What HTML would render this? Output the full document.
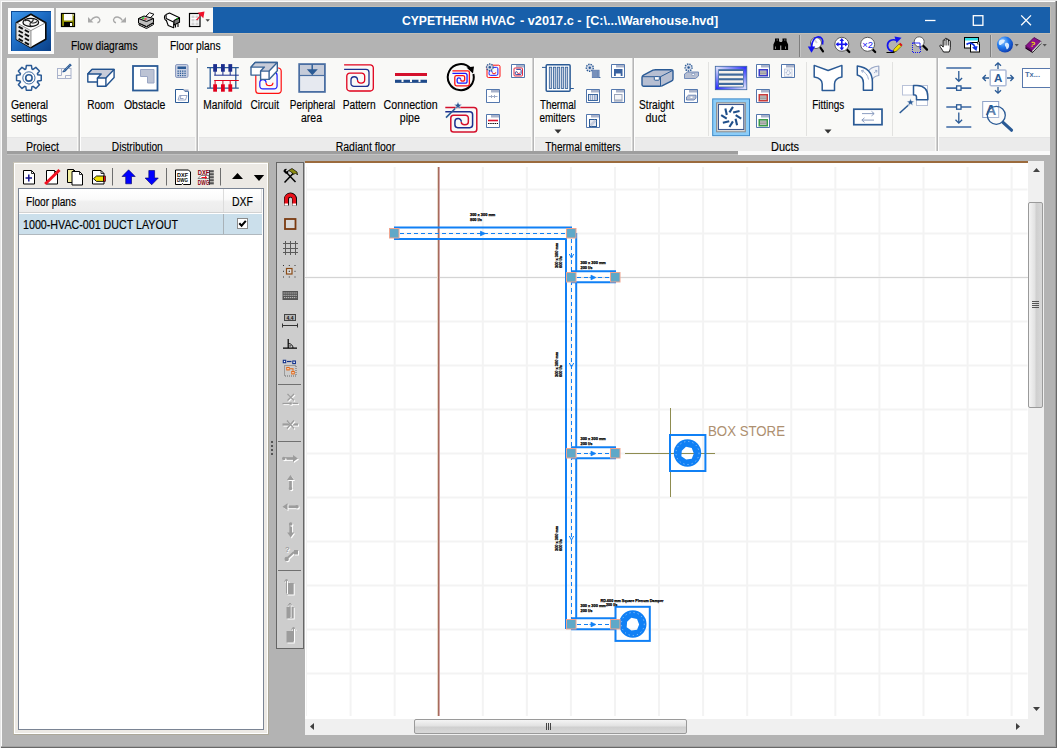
<!DOCTYPE html>
<html lang="en"><head><meta charset="utf-8"><title>CYPETHERM HVAC - v2017.c</title>
<style>
html,body{margin:0;padding:0;}
body{width:1057px;height:748px;overflow:hidden;background:#b3b3b3;font-family:"Liberation Sans",sans-serif;}
#app{position:relative;width:1057px;height:748px;overflow:hidden;background:#b3b3b3;}
#app div,#app span,#app svg{position:absolute;box-sizing:border-box;}
.t{white-space:nowrap;display:block;-webkit-text-stroke:0.15px currentColor;}
svg{overflow:hidden;}

</style></head>
<body>
<div id="app">
<div style="left:0;top:0;width:1057px;height:1px;background:#e6e6e6"></div>
<div style="left:0;top:1px;width:1055px;height:1px;background:#fbfbfb"></div>
<div style="left:0;top:0;width:1px;height:748px;background:#e6e6e6"></div>
<div style="left:1px;top:1px;width:1px;height:745px;background:#fbfbfb"></div>
<div style="left:1055px;top:2px;width:1px;height:745px;background:#9c9c9c"></div>
<div style="left:1056px;top:1px;width:1px;height:747px;background:#686868"></div>
<div style="left:2px;top:746px;width:1054px;height:1px;background:#a2a2a2"></div>
<div style="left:1px;top:747px;width:1056px;height:1px;background:#686868"></div>
<div style="left:213px;top:6px;width:838px;height:28px;background:#c2beb6"></div>
<div id="titlebar" style="left:213px;top:7px;width:837px;height:26px;background:#185faa"></div>
<span class="t" style="left:402.00px;top:13.50px;font-size:12.5px;line-height:15px;color:#fff;transform:scaleX(0.9704);transform-origin:0 50%;font-weight:bold;-webkit-text-stroke:0;">CYPETHERM HVAC</span>
<span class="t" style="left:520.00px;top:13.50px;font-size:12.5px;line-height:15px;color:#fff;transform:scaleX(1.0174);transform-origin:0 50%;font-weight:bold;-webkit-text-stroke:0;">- v2017.c -</span>
<span class="t" style="left:585.80px;top:13.50px;font-size:12.5px;line-height:15px;color:#fff;transform:scaleX(1.0055);transform-origin:0 50%;font-weight:bold;-webkit-text-stroke:0;">[C:\...\Warehouse.hvd]</span>
<svg style="left:915px;top:7px" width="135" height="26" viewBox="0 0 135 26"><g stroke="#fff" stroke-width="1.3" fill="none"><path d="M10 13.5h10.500"/><rect x="58.300" y="8.700" width="9.600" height="9.600"/><path d="M106.200 8.400l9.800 9.800M116 8.400l-9.800 9.800"/></g></svg>
<div style="left:8px;top:8px;width:46px;height:46px;background:#fcfcfc"></div>
<div style="left:11px;top:11px;width:40px;height:40px;background:linear-gradient(135deg,#3f97ea 0%,#1d6cc4 45%,#0a3f86 100%);border-top:1px solid #0d4a94;border-left:1px solid #0d4a94"></div>
<div style="left:56px;top:8px;width:157px;height:24px;background:#f9f9f7"></div>
<div style="left:158px;top:36px;width:75px;height:23px;background:#f9f9f7"></div>
<span class="t" style="left:71.00px;top:38.50px;font-size:12.5px;line-height:15px;color:#000;transform:scaleX(0.8183);transform-origin:0 50%;">Flow diagrams</span>
<span class="t" style="left:170.00px;top:38.50px;font-size:12.5px;line-height:15px;color:#000;transform:scaleX(0.8168);transform-origin:0 50%;">Floor plans</span>
<svg style="left:11px;top:11px" width="40" height="40" viewBox="0 0 40 40">
<path d="M19.9 3.2L34.8 11.7V28.2L19.9 36.6L5.4 28.2V11.7z" fill="#fff" stroke="#0a0a0a" stroke-width="1.6" stroke-linejoin="round"/>
<path d="M5.4 11.7L19.9 19.6V36.6L5.4 28.2z" fill="#e4e4e4"/>
<path d="M19.9 19.6V36" stroke="#9a9a9a" stroke-width="1.2"/>
<path d="M6 12L19.9 19.6L34.2 12" fill="none" stroke="#8a8a8a" stroke-width="0.9"/>
<path d="M7.6 15.6l4.2 2.3" stroke="#0a0a0a" stroke-width="1.8"/>
<path d="M13.8 19.0l4.2 2.3" stroke="#0a0a0a" stroke-width="1.8"/>
<path d="M7.6 19.7l4.2 2.3" stroke="#0a0a0a" stroke-width="1.8"/>
<path d="M13.8 23.099999999999998l4.2 2.3" stroke="#0a0a0a" stroke-width="1.8"/>
<path d="M7.6 23.799999999999997l4.2 2.3" stroke="#0a0a0a" stroke-width="1.8"/>
<path d="M13.8 27.199999999999996l4.2 2.3" stroke="#0a0a0a" stroke-width="1.8"/>
<path d="M7.6 27.9l4.2 2.3" stroke="#0a0a0a" stroke-width="1.8"/>
<path d="M13.8 31.299999999999997l4.2 2.3" stroke="#0a0a0a" stroke-width="1.8"/>
<ellipse cx="19.8" cy="11.4" rx="7.8" ry="4.1" fill="#f4f4f4" stroke="#111" stroke-width="1.3"/>
<path d="M19.8 11.4c-2-2.4-4.4-2.6-6.2-1.4M19.8 11.4c2.8-1.4 3-3 1.6-4M19.8 11.4c2.6 1 5 .6 6.4-1M19.8 11.4c-1.4 1.6-1 3.2 .6 4" fill="none" stroke="#222" stroke-width="1.1"/>
</svg>
<svg style="left:56px;top:8px" width="157" height="24" viewBox="56 8 157 24">
<rect x="61.5" y="13.5" width="13" height="13" fill="#8c8c00" stroke="#000" stroke-width="1.2"/>
<rect x="64" y="14" width="8.5" height="6.5" fill="#fff"/>
<rect x="64" y="22" width="8.5" height="4.5" fill="#000"/>
<rect x="70" y="23" width="2" height="3" fill="#fff"/>
<rect x="73" y="14.5" width="1" height="1" fill="#fff"/>
<g fill="none" stroke="#a9a9a9" stroke-width="1.4"><path d="M91 20.5c2-3.6 6-4.4 8-2.4c1.8 2 .6 4.2-1.6 4.6"/><path d="M119.5 22.700c-2.200-.4-3.400-2.600-1.600-4.600c2-2 6-1.200 8 2.400" transform="translate(-3.500 0)"/></g>
<path d="M88 17v5.500h5.500z" fill="#a9a9a9"/>
<path d="M126 17v5.500h-5.500z" fill="#a9a9a9"/>
<g stroke="#000" stroke-width="1" stroke-linejoin="round">
<path d="M144.500 17.500l5-4.800l4.500 1.600l-5.500 5.200z" fill="#fff"/>
<path d="M138.500 18.500l5.500-2.500l9.500 2.500v4l-7 4l-8-3.500z" fill="#bdbdbd"/>
<path d="M138.500 18.500l8 3l7-3" fill="none"/>
<path d="M139 23.500l7.500 3.500l7-4v1.500l-7 4l-7.500-3.500z" fill="#fff"/>
</g>
<rect x="142" y="17.500" width="2.200" height="1.200" fill="#00d000"/><rect x="144.400" y="18.400" width="2.200" height="1.200" fill="#ff2020"/>
<g stroke="#000" stroke-width="1.1" stroke-linejoin="round">
<path d="M166 14.500l3.500-1.500l9.500 4.500v4l-3 1.800l-9.800-4.800z" fill="#fff"/>
<path d="M165.500 15c-1.500 1-1.500 4.500 .7 5.500" fill="none"/>
<path d="M166.200 20l2 5.500l5.500 2.300v-4.500" fill="#fff"/>
<path d="M174 20.500l5.500-2.700v4.500l-5.500 2.700z" fill="#7a7a7a"/>
<path d="M175.500 24.500v3M178 23.500v3.500" fill="none"/>
</g>
<rect x="176.500" y="18" width="1.300" height="1.300" fill="#00c000"/>
<rect x="189.500" y="13.500" width="10.500" height="13" fill="#fff" stroke="#000" stroke-width="1.200"/>
<g fill="#d4d4d4"><rect x="191.500" y="15.500" width="3" height="2.500"/><rect x="195.500" y="15.500" width="3" height="2.500"/><rect x="191.500" y="19" width="3" height="2.500"/><rect x="195.500" y="19" width="3" height="2.500"/><rect x="191.500" y="22.500" width="3" height="2.500"/><rect x="195.500" y="22.500" width="3" height="2.500"/></g>
<path d="M196 19.800l4.300-4.600l-2.600-2.500l6.800-1.200l-1.200 6.800l-2.500-2.600l-3.300 4.600z" fill="#f0102a"/>
<path d="M205.500 19.300h4.400l-2.200 2.400z" fill="#444"/>
</svg>
<svg style="left:765px;top:33px" width="285" height="25" viewBox="765 33 285 25">
<g fill="#000"><path d="M775 38.500h4v2.500l1.200 1.500v7.500h-6.800v-5.500l1.600-3.500z"/><path d="M782.500 38.500h4l0 2.500l1.600 3.500v5.500h-6.800v-7.500l1.200-1.500z"/><rect x="779.500" y="42" width="3" height="3.500"/></g>
<path d="M775.500 46.500v2.500M785.500 46.500v2.500M776.500 40h1.500M784 40h1.500" stroke="#9a9a9a" stroke-width="0.800"/>
<path d="M799.5 35V57" stroke="#7e7e7e" stroke-width="1"/><path d="M800.5 35V57" stroke="#c4c4c4" stroke-width="1"/>
<path d="M990.5 35V57" stroke="#7e7e7e" stroke-width="1"/><path d="M991.5 35V57" stroke="#c4c4c4" stroke-width="1"/>
<path d="M819.9 46.9L823 51.3" stroke="#000" stroke-width="2.200" stroke-linecap="round"/><circle cx="816" cy="43" r="5.5" fill="#fff" stroke="#5a5a5a" stroke-width="1"/>
<path d="M813.500 38.500l3.500 4.500" stroke="#d8d8d8" stroke-width="2"/>
<path d="M822.500 44.500c1.500-4.500-1-8-5-7.500c-3.500 .6-5.500 4.500-6 10" fill="none" stroke="#1414f0" stroke-width="1.700"/><path d="M807.800 46.500h7.400l-3.700 6.200z" fill="#1414f0"/>
<path d="M846.7 49.2L849.3 52" stroke="#000" stroke-width="2.200" stroke-linecap="round"/><circle cx="841.8" cy="44.3" r="7" fill="#fff" stroke="#5a5a5a" stroke-width="1"/>
<g fill="#1414f0"><path d="M841.800 38l2.300 3h-4.600zM841.800 50.600l2.300-3h-4.600zM835.500 44.300l3-2.300v4.600zM848.100 44.300l-3-2.300v4.600z"/><rect x="841" y="40" width="1.600" height="8.600"/><rect x="837.500" y="43.500" width="8.600" height="1.600"/></g>
<path d="M872.5 49.2L875.2 52" stroke="#000" stroke-width="2.200" stroke-linecap="round"/><circle cx="867.6" cy="44.3" r="7" fill="#fff" stroke="#5a5a5a" stroke-width="1"/>
<text x="867.600" y="48" text-anchor="middle" font-family="Liberation Sans, sans-serif" font-size="9.500" fill="#1414f0">×2</text>
<path d="M896.500 50.500c-4.500 2-9-.5-9-5c0-4.500 4.500-7 9.500-5" fill="none" stroke="#1414f0" stroke-width="1.700"/><path d="M894.500 36.500l7 1.300l-5 5.200z" fill="#1414f0"/>
<path d="M886.500 52.500h8" stroke="#000" stroke-width="1"/>
<path d="M893 52l1-3l5-5l2.300 2.300l-5 5z" fill="#f0e000" stroke="#5a5000" stroke-width="0.600"/><path d="M899 44l1.300-1.300l2.300 2.300l-1.300 1.300z" fill="#e01010"/><path d="M893 52l.5-1.500l1 1z" fill="#000"/>
<rect x="912.500" y="43" width="8" height="9.500" fill="none" stroke="#1414f0" stroke-width="1" stroke-dasharray="1 1"/>
<path d="M922.7 45.3L927 49.6" stroke="#000" stroke-width="2.200" stroke-linecap="round"/><circle cx="919.2" cy="41.8" r="5" fill="#fff" stroke="#5a5a5a" stroke-width="1"/>
<path d="M912.500 43h7.500v6" fill="none" stroke="#2a2af0" stroke-width="1"/>
<path d="M943.500 52c-1-2-2.800-4.200-3.500-5.500c-.6-1.200 .8-2 1.800-1l1.400 1.600v-6.400c0-1.300 1.800-1.300 1.800 0v-1.500c0-1.300 1.800-1.300 1.800 0v.8c0-1.300 1.800-1.300 1.800 0v1.200c0-1.200 1.700-1.200 1.700 0v6.300c0 2-.6 3-1.200 4.500z" fill="#fff" stroke="#000" stroke-width="0.900" stroke-linejoin="round"/><path d="M945 45.500v-4.500M946.800 45.500v-5.500M948.600 45.500v-4.700" stroke="#000" stroke-width="0.700"/>
<rect x="964.500" y="37.500" width="14" height="10.500" fill="#fff" stroke="#000" stroke-width="1"/><rect x="965" y="38" width="13" height="2.500" fill="#30e0e8"/>
<rect x="970.500" y="42.500" width="9" height="9.500" fill="#fff" stroke="#000" stroke-width="1"/><rect x="977.500" y="42" width="2" height="2" fill="#fff" stroke="#000" stroke-width="0.600"/>
<path d="M966.500 44.500c3-2.500 7-1.500 8.500 2.500" fill="none" stroke="#1030e0" stroke-width="1.800"/><path d="M972 47.500l5.500-1.500l-1 5z" fill="#1030e0"/>
<defs><radialGradient id="glb" cx="0.35" cy="0.3" r="0.8"><stop offset="0" stop-color="#9fd0ff"/><stop offset="0.45" stop-color="#1f7af0"/><stop offset="1" stop-color="#0a2fa0"/></radialGradient></defs>
<circle cx="1005" cy="44.600" r="8" fill="url(#glb)"/>
<path d="M999.500 40.500c2-1.500 4.500-1 5.500 0c-1 1.500-1 2.500-2.500 3c-1 .5-1.500 2-3 1.500c-1-1-1-3 0-4.500zM1005.500 43c1.500-.5 3 0 3.500 1.500c.5 2-.5 4-2 5c-1-.5-.5-2-1.500-3c-.8-1-.8-2.500 0-3.500z" fill="#e8f4ff" opacity="0.900"/>
<path d="M1014.600 44h4.200l-2.100 2.400z" fill="#555"/>
<g stroke-linejoin="round"><path d="M1025.500 46l8.500-8.500l7 4l-8.500 9z" fill="#8a108a" stroke="#4a004a" stroke-width="0.800"/><path d="M1025.500 46l7 4.500v2l-7-4z" fill="#5a005a"/><path d="M1032.500 50.500l8.500-9v2l-8.500 9z" fill="#fff" stroke="#888" stroke-width="0.500"/><path d="M1025.500 48l7 4.500l8.500-9" fill="none" stroke="#000" stroke-width="0.800"/></g>
<text x="1033" y="47" text-anchor="middle" font-family="Liberation Sans, sans-serif" font-weight="bold" font-size="7.500" fill="#f0e000" transform="rotate(20 1033 44)">?</text>
<path d="M1042.600 44h4.200l-2.100 2.400z" fill="#555"/>
</svg>
<div id="ribbon" style="left:7px;top:58px;width:1043px;height:97px;background:#f9f9f7"></div>
<div style="left:7px;top:137px;width:1043px;height:14px;background:#ebebeb;border-top:1px solid #e5e5e5"></div>
<div style="left:7px;top:151px;width:1043px;height:4px;background:#fafafa"></div>
<div style="left:7px;top:151px;width:731px;height:3px;background:#9e9e9e"></div>
<div style="left:7px;top:154px;width:731px;height:1px;background:#c2c2c2"></div>
<div style="left:77px;top:58px;width:1px;height:93px;background:#f9f9f7"></div>
<div style="left:78px;top:58px;width:1px;height:93px;background:#d2d2d2"></div>
<div style="left:79px;top:58px;width:1px;height:93px;background:#b6b6b6"></div>
<div style="left:80px;top:58px;width:1px;height:93px;background:#fefefe"></div>
<div style="left:195px;top:58px;width:1px;height:93px;background:#f9f9f7"></div>
<div style="left:196px;top:58px;width:1px;height:93px;background:#d2d2d2"></div>
<div style="left:197px;top:58px;width:1px;height:93px;background:#b6b6b6"></div>
<div style="left:198px;top:58px;width:1px;height:93px;background:#fefefe"></div>
<div style="left:531px;top:58px;width:1px;height:93px;background:#f9f9f7"></div>
<div style="left:532px;top:58px;width:1px;height:93px;background:#d2d2d2"></div>
<div style="left:533px;top:58px;width:1px;height:93px;background:#b6b6b6"></div>
<div style="left:534px;top:58px;width:1px;height:93px;background:#fefefe"></div>
<div style="left:631px;top:58px;width:1px;height:93px;background:#f9f9f7"></div>
<div style="left:632px;top:58px;width:1px;height:93px;background:#d2d2d2"></div>
<div style="left:633px;top:58px;width:1px;height:93px;background:#b6b6b6"></div>
<div style="left:634px;top:58px;width:1px;height:93px;background:#fefefe"></div>
<div style="left:935px;top:58px;width:1px;height:93px;background:#f9f9f7"></div>
<div style="left:936px;top:58px;width:1px;height:93px;background:#d2d2d2"></div>
<div style="left:937px;top:58px;width:1px;height:93px;background:#b6b6b6"></div>
<div style="left:938px;top:58px;width:1px;height:93px;background:#fefefe"></div>
<div style="left:708px;top:62px;width:1px;height:74px;background:#e2e2e0"></div>
<div style="left:806px;top:62px;width:1px;height:74px;background:#e2e2e0"></div>
<div style="left:892px;top:62px;width:1px;height:74px;background:#e2e2e0"></div>
<span class="t" style="left:10.50px;top:98.00px;font-size:12.5px;line-height:15px;color:#000;transform:scaleX(0.8321);transform-origin:0 50%;">General</span>
<span class="t" style="left:10.50px;top:111.00px;font-size:12.5px;line-height:15px;color:#000;transform:scaleX(0.8357);transform-origin:0 50%;">settings</span>
<span class="t" style="left:83.83px;top:98.00px;font-size:12.5px;line-height:15px;color:#000;transform:scaleX(0.8098);transform-origin:50% 50%;">Room</span>
<span class="t" style="left:119.84px;top:98.00px;font-size:12.5px;line-height:15px;color:#000;transform:scaleX(0.8413);transform-origin:50% 50%;">Obstacle</span>
<span class="t" style="left:198.88px;top:98.00px;font-size:12.5px;line-height:15px;color:#000;transform:scaleX(0.8149);transform-origin:50% 50%;">Manifold</span>
<span class="t" style="left:246.99px;top:98.00px;font-size:12.5px;line-height:15px;color:#000;transform:scaleX(0.8047);transform-origin:50% 50%;">Circuit</span>
<span class="t" style="left:283.81px;top:98.00px;font-size:12.5px;line-height:15px;color:#000;transform:scaleX(0.7986);transform-origin:50% 50%;">Peripheral</span>
<span class="t" style="left:298.99px;top:111.00px;font-size:12.5px;line-height:15px;color:#000;transform:scaleX(0.8395);transform-origin:50% 50%;">area</span>
<span class="t" style="left:339.35px;top:98.00px;font-size:12.5px;line-height:15px;color:#000;transform:scaleX(0.8189);transform-origin:50% 50%;">Pattern</span>
<span class="t" style="left:378.88px;top:98.00px;font-size:12.5px;line-height:15px;color:#000;transform:scaleX(0.8540);transform-origin:50% 50%;">Connection</span>
<span class="t" style="left:398.18px;top:111.00px;font-size:12.5px;line-height:15px;color:#000;transform:scaleX(0.8464);transform-origin:50% 50%;">pipe</span>
<span class="t" style="left:535.08px;top:98.00px;font-size:12.5px;line-height:15px;color:#000;transform:scaleX(0.7853);transform-origin:50% 50%;">Thermal</span>
<span class="t" style="left:535.48px;top:111.00px;font-size:12.5px;line-height:15px;color:#000;transform:scaleX(0.7987);transform-origin:50% 50%;">emitters</span>
<span class="t" style="left:635.46px;top:98.00px;font-size:12.5px;line-height:15px;color:#000;transform:scaleX(0.8125);transform-origin:50% 50%;">Straight</span>
<span class="t" style="left:643.89px;top:111.00px;font-size:12.5px;line-height:15px;color:#000;transform:scaleX(0.8677);transform-origin:50% 50%;">duct</span>
<span class="t" style="left:808.36px;top:98.00px;font-size:12.5px;line-height:15px;color:#000;transform:scaleX(0.7943);transform-origin:50% 50%;">Fittings</span>
<div style="left:7px;top:137px;width:1043px;height:14px;overflow:hidden">
<span class="t" style="left:15.55px;top:2.50px;font-size:12.5px;line-height:15px;color:#000;transform:scaleX(0.8483);transform-origin:50% 50%;">Project</span>
<span class="t" style="left:99.24px;top:2.50px;font-size:12.5px;line-height:15px;color:#000;transform:scaleX(0.8157);transform-origin:50% 50%;">Distribution</span>
<span class="t" style="left:322.87px;top:2.50px;font-size:12.5px;line-height:15px;color:#000;transform:scaleX(0.8396);transform-origin:50% 50%;">Radiant floor</span>
<span class="t" style="left:529.42px;top:2.50px;font-size:12.5px;line-height:15px;color:#000;transform:scaleX(0.8052);transform-origin:50% 50%;">Thermal emitters</span>
<span class="t" style="left:762.02px;top:2.50px;font-size:12.5px;line-height:15px;color:#000;transform:scaleX(0.8763);transform-origin:50% 50%;">Ducts</span>
</div>
<svg style="left:554px;top:128.700px" width="8" height="5" viewBox="0 0 8 5"><path d="M0.5 0.5h7L4 4.5z" fill="#333"/></svg>
<svg style="left:824px;top:128.700px" width="8" height="5" viewBox="0 0 8 5"><path d="M0.5 0.5h7L4 4.5z" fill="#333"/></svg>
<svg style="left:7px;top:58px" width="1043" height="80" viewBox="7 58 1043 80">
<path d="M25.86 69.01L26.34 65.56L31.46 65.56L31.94 69.01L33.04 69.46L35.82 67.37L39.43 70.98L37.34 73.76L37.79 74.86L41.24 75.34L41.24 80.46L37.79 80.94L37.34 82.04L39.43 84.82L35.82 88.43L33.04 86.34L31.94 86.79L31.46 90.24L26.34 90.24L25.86 86.79L24.76 86.34L21.98 88.43L18.37 84.82L20.46 82.04L20.01 80.94L16.56 80.46L16.56 75.34L20.01 74.86L20.46 73.76L18.37 70.98L21.98 67.37L24.76 69.46z" fill="#fcfcfc" stroke="#2a5a95" stroke-width="1.5" stroke-linejoin="round"/>
<circle cx="28.9" cy="77.9" r="6.1" fill="none" stroke="#2a5a95" stroke-width="0.9"/>
<circle cx="28.9" cy="77.9" r="3.2" fill="none" stroke="#2a5a95" stroke-width="1.6"/>
<g fill="none" stroke="#aab3cc" stroke-width="1"><rect x="57.5" y="68.5" width="13.5" height="10"/><path d="M57.5 75.5h4v-4h4M65.500 78.500v-3h5.500M61.500 68.500v3"/></g>
<path d="M62.500 72.500l1-2.500l6.500-6.500l1.800 1.800l-6.500 6.500z" fill="#2a5a95"/>
<path d="M64.500 70.500l5.500-5.500M65.500 71.500l5.500-5.500" stroke="#fff" stroke-width="0.5" stroke-dasharray="1 1"/>
<g stroke="#23538f" stroke-width="1.4" stroke-linejoin="round"><path d="M92.0 69.4L114.1 69.4L114.1 77.6L105.9 86.3L97.4 86.3L97.4 82.0L87.8 82.0L87.8 74.0z" fill="#fff"/><path d="M92.0 69.4L114.1 69.4L105.9 78.0L97.4 78.0L101.2 74.0L87.8 74.0z" fill="#c8ccd9"/><path d="M105.9 78.0L105.9 86.3M97.4 78.0L97.4 82.0" fill="none"/></g>
<rect x="133" y="66" width="24.500" height="24.500" fill="#fff" stroke="#2a5a95" stroke-width="1.8"/>
<path d="M140.500 69.500H154V83H147.500V76.500H140.500z" fill="#bcc3d4" stroke="#9aa6c4" stroke-width="1"/>
<rect x="175.500" y="64.500" width="12.500" height="13" rx="1.5" fill="#c9d0e2" stroke="#8d9cc0" stroke-width="1"/>
<rect x="177.500" y="66.500" width="8.500" height="2.500" fill="#2a5a95"/>
<rect x="177.5" y="70.5" width="1.300" height="1.300" fill="#2a5a95"/>
<rect x="179.8" y="70.5" width="1.300" height="1.300" fill="#2a5a95"/>
<rect x="182.1" y="70.5" width="1.300" height="1.300" fill="#2a5a95"/>
<rect x="184.4" y="70.5" width="1.300" height="1.300" fill="#2a5a95"/>
<rect x="177.5" y="72.7" width="1.300" height="1.300" fill="#2a5a95"/>
<rect x="179.8" y="72.7" width="1.300" height="1.300" fill="#2a5a95"/>
<rect x="182.1" y="72.7" width="1.300" height="1.300" fill="#2a5a95"/>
<rect x="184.4" y="72.7" width="1.300" height="1.300" fill="#2a5a95"/>
<rect x="177.5" y="74.9" width="1.300" height="1.300" fill="#2a5a95"/>
<rect x="179.8" y="74.9" width="1.300" height="1.300" fill="#2a5a95"/>
<rect x="182.1" y="74.9" width="1.300" height="1.300" fill="#2a5a95"/>
<rect x="184.4" y="74.9" width="1.300" height="1.300" fill="#2a5a95"/>
<path d="M175.500 89.500h8l1.500 2h3.500v11h-13z" fill="#fff" stroke="#2a5a95" stroke-width="1"/>
<path d="M183.500 89.500h5v2h-3.500z" fill="#9aa6c4"/>
<path d="M178 100l1.500-4.500h7.500l-1.500 4.500zM181 95.500l-1 3h3.500" fill="none" stroke="#8d9cc0" stroke-width="0.9"/>
</svg>
<svg style="left:198px;top:58px" width="336" height="80" viewBox="198 58 336 80">
<g stroke="#2a5a95" stroke-width="1.3" fill="none"><path d="M207 67.700H238.800M207 88.100H238.800M210.200 67.700V88.100M235.800 67.700V88.100"/></g>
<g stroke="#1c2f8e" stroke-width="1" fill="none"><path d="M214.200 75.200H238.800M215.100 71V75.200M222.900 71V75.200M230.200 71V75.200"/></g>
<g stroke="#e0001c" stroke-width="1" fill="none"><path d="M214.200 80.500H238.800M215.100 80.500V85M222.900 80.500V85M230.200 80.500V85"/></g>
<rect x="213.2" y="64.100" width="3.800" height="7.600" fill="#1c2f8e"/>
<rect x="213.2" y="84.300" width="3.800" height="7.400" fill="#e0001c"/>
<rect x="221" y="64.100" width="3.800" height="7.600" fill="#1c2f8e"/>
<rect x="221" y="84.300" width="3.800" height="7.400" fill="#e0001c"/>
<rect x="228.4" y="64.100" width="3.800" height="7.600" fill="#1c2f8e"/>
<rect x="228.4" y="84.300" width="3.800" height="7.400" fill="#e0001c"/>
<path d="M258.72 68.00H278.28a2.92 2.92 0 0 1 2.92 2.92V90.48a2.92 2.92 0 0 1 -2.92 2.92H258.72a2.92 2.92 0 0 1 -2.92 -2.92V70.92a2.92 2.92 0 0 1 2.92 -2.92zM272.94 82.73a3.44 2.93 0 0 1 -6.88 0" fill="none" stroke="#ff1010" stroke-width="1.2"/><path d="M266.06 82.73a3.12 3.12 0 0 0 -6.25 0V86.01a2.92 2.92 0 0 0 2.92 2.92H274.16a2.92 2.92 0 0 0 2.92 -2.92V75.38a2.92 2.92 0 0 0 -2.92 -2.92H262.73" fill="none" stroke="#1a1aff" stroke-width="1.2"/>
<g stroke="#3a6496" stroke-width="1.4" stroke-linejoin="round"><path d="M255.2 62.5L277.3 62.5L277.3 70.7L269.1 79.4L260.6 79.4L260.6 75.1L251.0 75.1L251.0 67.1z" fill="#fff"/><path d="M255.2 62.5L277.3 62.5L269.1 71.1L260.6 71.1L264.4 67.1L251.0 67.1z" fill="#c8ccd9"/><path d="M269.1 71.1L269.1 79.4M260.6 71.1L260.6 75.1" fill="none"/></g>
<rect x="299.200" y="64.100" width="25.700" height="27.800" fill="#e6e9f0" stroke="#4a6ea2" stroke-width="1.8"/>
<rect x="300.100" y="65" width="23.900" height="10" fill="#c5cbd9"/>
<path d="M299.200 75.500H324.900" stroke="#4a6ea2" stroke-width="1.200"/>
<path d="M312.200 64.500V70" stroke="#2a5a95" stroke-width="1.400"/><path d="M306.800 69.200H317.800L312.300 75.300z" fill="#2a5a95"/>
<path d="M344.10 64.80H370.29a3.01 3.01 0 0 1 3.01 3.01V87.99a3.01 3.01 0 0 1 -3.01 3.01H349.81a3.01 3.01 0 0 1 -3.01 -3.01V76.12a3.01 3.01 0 0 1 3.01 -3.01H361.67a3.01 3.01 0 0 1 3.01 3.01V80.00a3.59 3.05 0 0 1 -7.18 0" fill="none" stroke="#e0001c" stroke-width="1.3"/><path d="M344.10 69.40H365.99a3.01 3.01 0 0 1 3.01 3.01V83.38a3.01 3.01 0 0 1 -3.01 3.01H354.00a3.01 3.01 0 0 1 -3.01 -3.01V80.00a3.26 3.26 0 0 1 6.52 0" fill="none" stroke="#1c2f8e" stroke-width="1.3"/>
<rect x="395" y="73" width="32" height="3" fill="#d4102c"/>
<path d="M395 81H427" stroke="#1f4a8a" stroke-width="2.600" stroke-dasharray="6.500 2"/><path d="M395 82.500H427" stroke="#1f4a8a" stroke-width="0.800"/>
<path d="M470.500 68.500A13 13 0 1 0 473.400 74" fill="none" stroke="#000" stroke-width="2"/>
<path d="M466.500 67.500L474 66.500L473 73.500z" fill="#000"/>
<path d="M452.40 70.80H467.72a1.68 1.68 0 0 1 1.68 1.68V84.12a1.68 1.68 0 0 1 -1.68 1.68H456.48a1.68 1.68 0 0 1 -1.68 -1.68V77.23a1.68 1.68 0 0 1 1.68 -1.68H462.98a1.68 1.68 0 0 1 1.68 1.68V79.50a1.98 1.68 0 0 1 -3.96 0" fill="none" stroke="#ff1010" stroke-width="1.3"/><path d="M452.40 73.43H465.36a1.68 1.68 0 0 1 1.68 1.68V81.48a1.68 1.68 0 0 1 -1.68 1.68H458.79a1.68 1.68 0 0 1 -1.68 -1.68V79.50a1.80 1.80 0 0 1 3.59 0" fill="none" stroke="#1a1aff" stroke-width="1.3"/>
<path d="M445.30 107.50H473.98a2.82 2.82 0 0 1 2.82 2.82V129.18a2.82 2.82 0 0 1 -2.82 2.82H453.62a2.82 2.82 0 0 1 -2.82 -2.82V118.08a2.82 2.82 0 0 1 2.82 -2.82H465.53a2.82 2.82 0 0 1 2.82 2.82V121.71a3.52 2.99 0 0 1 -7.05 0" fill="none" stroke="#d4102c" stroke-width="1.5"/><path d="M445.30 111.80H469.77a2.82 2.82 0 0 1 2.82 2.82V124.87a2.82 2.82 0 0 1 -2.82 2.82H457.73a2.82 2.82 0 0 1 -2.82 -2.82V121.71a3.20 3.20 0 0 1 6.40 0" fill="none" stroke="#1c2f8e" stroke-width="1.5"/>
<path d="M446 117.600L456 107.700" stroke="#2a5a95" stroke-width="1.600"/>
<path d="M458 101.500l1.100 2.800l3 .1l-2.400 1.900l.9 2.900l-2.600-1.700l-2.600 1.700l.9-2.900l-2.400-1.900l3-.1z" fill="#2a5a95" stroke="#fff" stroke-width="0.500"/>
<path d="M488.41 65.20H498.59a1.41 1.41 0 0 1 1.41 1.41V76.09a1.41 1.41 0 0 1 -1.41 1.41H488.41a1.41 1.41 0 0 1 -1.41 -1.41V66.61a1.41 1.41 0 0 1 1.41 -1.41zM495.77 72.33a1.76 1.50 0 0 1 -3.52 0" fill="none" stroke="#ff1010" stroke-width="1"/><path d="M492.25 72.33a1.60 1.60 0 0 0 -3.20 0V73.92a1.41 1.41 0 0 0 1.41 1.41H496.48a1.41 1.41 0 0 0 1.41 -1.41V68.77a1.41 1.41 0 0 0 -1.41 -1.41H490.47" fill="none" stroke="#1a1aff" stroke-width="1"/>
<circle cx="489.800" cy="67.300" r="3.300" fill="#d0d6e4" stroke="#2a5a95" stroke-width="1.300" stroke-dasharray="1.400 1"/><circle cx="489.800" cy="67.300" r="1.200" fill="#2a5a95"/>
<path d="M511.5 64.5h13v13h-13z" fill="#fff" stroke="#3f68a4" stroke-width="0.900"/><rect x="516" y="65" width="8" height="2.500" fill="#a9b3cb"/>
<path d="M514.92 68.00H521.58a0.92 0.92 0 0 1 0.92 0.92V75.08a0.92 0.92 0 0 1 -0.92 0.92H514.92a0.92 0.92 0 0 1 -0.92 -0.92V68.92a0.92 0.92 0 0 1 0.92 -0.92zM519.74 72.64a1.15 0.98 0 0 1 -2.30 0" fill="none" stroke="#e0102c" stroke-width="0.9"/><path d="M517.43 72.64a1.05 1.05 0 0 0 -2.09 0V73.67a0.92 0.92 0 0 0 0.92 0.92H520.20a0.92 0.92 0 0 0 0.92 -0.92V70.32a0.92 0.92 0 0 0 -0.92 -0.92H516.26" fill="none" stroke="#1c2f8e" stroke-width="0.9"/>
<path d="M486.5 89.5h13v13h-13z" fill="#fff" stroke="#3f68a4" stroke-width="0.900"/><rect x="491" y="90" width="8" height="2.500" fill="#a9b3cb"/>
<path d="M488.500 96.500h4M497.500 96.500h-4M491 95l1.500 1.500L491 98M495 95l-1.500 1.500L495 98" fill="none" stroke="#8796b8" stroke-width="0.800"/>
<path d="M486.5 114.5h13v13h-13z" fill="#fff" stroke="#3f68a4" stroke-width="0.900"/><rect x="491" y="115" width="8" height="2.500" fill="#a9b3cb"/>
<path d="M488 120.500H498" stroke="#e0102c" stroke-width="1.600"/><path d="M488 123.500H498" stroke="#111" stroke-width="1.200" stroke-dasharray="1.500 0.700"/>
</svg>
<svg style="left:534px;top:58px" width="516" height="80" viewBox="534 58 516 80">
<path d="M542 67.400H546.200M570.100 88.500H573.800" stroke="#2a5a95" stroke-width="1"/>
<rect x="546.200" y="64.700" width="23.900" height="26.500" rx="1" fill="#fff" stroke="#2a5a95" stroke-width="1.500"/>
<rect x="549.3" y="67.200" width="2.400" height="21.300" fill="#c3ccdf" stroke="#2a5a95" stroke-width="0.800"/>
<rect x="553.4" y="67.200" width="2.400" height="21.300" fill="#c3ccdf" stroke="#2a5a95" stroke-width="0.800"/>
<rect x="557.3" y="67.200" width="2.400" height="21.300" fill="#c3ccdf" stroke="#2a5a95" stroke-width="0.800"/>
<rect x="561.3" y="67.200" width="2.400" height="21.300" fill="#c3ccdf" stroke="#2a5a95" stroke-width="0.800"/>
<rect x="565.3" y="67.200" width="2.400" height="21.300" fill="#c3ccdf" stroke="#2a5a95" stroke-width="0.800"/>
<circle cx="589.8" cy="67.8" r="3.5" fill="#d4dae8" stroke="#2a5a95" stroke-width="1.400" stroke-dasharray="1.400 1"/><circle cx="589.8" cy="67.8" r="1.200" fill="#2a5a95"/>
<rect x="592.300" y="70.200" width="6.800" height="7.400" fill="#8fa3c8" stroke="#5d7bb0" stroke-width="0.800"/><path d="M594 70.500v7M596 70.500v7M597.800 70.500v7" stroke="#4a6ea2" stroke-width="0.700"/><path d="M599 77.500h1.500" stroke="#2a5a95" stroke-width="0.800"/>
<path d="M611.5 64.5h13v13h-13z" fill="#fff" stroke="#3f68a4" stroke-width="0.900"/><rect x="616" y="65" width="8" height="2.500" fill="#a9b3cb"/>
<path d="M614 69h8.500v7h-1.800v-2.500h-4.900v2.500h-1.800z" fill="#3a62a0"/>
<path d="M586.5 89.5h13v13h-13z" fill="#fff" stroke="#3f68a4" stroke-width="0.900"/><rect x="591" y="90" width="8" height="2.500" fill="#a9b3cb"/>
<rect x="588.500" y="94.500" width="9" height="6" fill="#dfe4ef" stroke="#2a5a95" stroke-width="0.900"/><path d="M590.500 95v5M592.500 95v5M594.500 95v5M596 95v5" stroke="#7d93bd" stroke-width="0.700"/>
<path d="M611.5 89.5h13v13h-13z" fill="#fff" stroke="#3f68a4" stroke-width="0.900"/><rect x="616" y="90" width="8" height="2.500" fill="#a9b3cb"/>
<rect x="614.500" y="94.500" width="7.500" height="5.500" fill="#f4f5f8" stroke="#9aa4bb" stroke-width="1"/><path d="M614 101h8.500" stroke="#8a94ab" stroke-width="1"/>
<path d="M586.5 114.5h13v13h-13z" fill="#fff" stroke="#3f68a4" stroke-width="0.900"/><rect x="591" y="115" width="8" height="2.500" fill="#a9b3cb"/>
<rect x="589.500" y="119.500" width="7" height="7" fill="#e8ebf2" stroke="#2a5a95" stroke-width="1"/><path d="M590.500 125.500l5-5" stroke="#c5ccdc" stroke-width="2.500"/>
<g stroke="#2a5a95" stroke-width="1.400" stroke-linejoin="round">
<path d="M642 77.500Q642 76 643.500 75.200L653 70.200Q654 69.800 655.500 69.800H671Q673 69.800 673 71.500V79Q673 80.300 671.800 80.900L662 85.800Q661 86.200 659.500 86.200H643.500Q642 86.200 642 84.800z" fill="#b7bfd2"/>
<path d="M642.500 76.700H660.500L672.500 70.500M660.500 76.700V86" fill="none" stroke-width="1"/>
<rect x="654.300" y="76.600" width="5" height="3.600" rx="0.800" fill="#fff" stroke-width="1"/>
</g>
<circle cx="688.6" cy="67.5" r="3.5" fill="#d4dae8" stroke="#2a5a95" stroke-width="1.400" stroke-dasharray="1.400 1"/><circle cx="688.6" cy="67.5" r="1.200" fill="#2a5a95"/>
<path d="M684.500 74l3-2h11v4l-3 2.500h-11z" fill="#b7bfd2" stroke="#6682b4" stroke-width="0.900"/><rect x="692" y="73.500" width="2.500" height="1.800" fill="#fff" stroke="#6682b4" stroke-width="0.500"/>
<path d="M684.5 89.5h13v13h-13z" fill="#fff" stroke="#3f68a4" stroke-width="0.900"/><rect x="689" y="90" width="8" height="2.500" fill="#a9b3cb"/>
<path d="M686.500 97l2-1.800h7.500v3l-2 1.800h-7.500z" fill="#b7bfd2" stroke="#6682b4" stroke-width="0.900"/><rect x="690.500" y="96.500" width="2" height="1.500" fill="#fff"/>
<defs><linearGradient id="grl" x1="0" y1="1" x2="1" y2="0"><stop offset="0" stop-color="#1a1aff"/><stop offset="0.3" stop-color="#8c94f8"/><stop offset="0.5" stop-color="#dcdffc"/><stop offset="0.7" stop-color="#8c94f8"/><stop offset="1" stop-color="#1a1aff"/></linearGradient></defs>
<rect x="715.300" y="66.300" width="31.500" height="23.400" fill="url(#grl)" stroke="#3a64a0" stroke-width="0.800"/>
<rect x="718.300" y="69.200" width="25.300" height="18.200" fill="#3f6a9c"/>
<rect x="719" y="71" width="24" height="2.5" fill="#f6f2ec"/>
<rect x="719" y="75.7" width="24" height="2.5" fill="#f6f2ec"/>
<rect x="719" y="80.3" width="24" height="2.5" fill="#f6f2ec"/>
<rect x="719" y="85" width="24" height="1.6" fill="#f6f2ec"/>
<rect x="712.700" y="98.900" width="36.800" height="36.800" fill="#8ccdf8" stroke="#3a88c8" stroke-width="1"/>
<rect x="716.600" y="102.800" width="28.700" height="29" fill="#d8d8d8" stroke="#8c8c8c" stroke-width="1"/>
<rect x="718.400" y="104.600" width="25.400" height="24.800" fill="#fff" stroke="#1f3f80" stroke-width="0.900"/>
<path d="M735.58 118.86L737.05 125.26" stroke="#1f4f8a" stroke-width="2.100"/>
<path d="M732.92 121.38L729.43 126.94" stroke="#1f4f8a" stroke-width="2.100"/>
<path d="M729.24 121.28L722.84 122.75" stroke="#1f4f8a" stroke-width="2.100"/>
<path d="M726.72 118.62L721.16 115.13" stroke="#1f4f8a" stroke-width="2.100"/>
<path d="M726.82 114.94L725.35 108.54" stroke="#1f4f8a" stroke-width="2.100"/>
<path d="M729.48 112.42L732.97 106.86" stroke="#1f4f8a" stroke-width="2.100"/>
<path d="M733.16 112.52L739.56 111.05" stroke="#1f4f8a" stroke-width="2.100"/>
<path d="M735.68 115.18L741.24 118.67" stroke="#1f4f8a" stroke-width="2.100"/>
<path d="M756.5 64.5h13v13h-13z" fill="#fff" stroke="#3f68a4" stroke-width="0.900"/><rect x="761" y="65" width="8" height="2.500" fill="#a9b3cb"/><rect x="758.5" y="69" width="9.500" height="7.500" fill="#3a3ac8"/><rect x="760" y="70.5" width="6.500" height="4.500" fill="#c8c8c8"/><path d="M760 72h6.500M760 73.7h6.500" stroke="#8a8a8a" stroke-width="0.800"/>
<path d="M756.5 89.5h13v13h-13z" fill="#fff" stroke="#3f68a4" stroke-width="0.900"/><rect x="761" y="90" width="8" height="2.500" fill="#a9b3cb"/><rect x="758.5" y="94" width="9.500" height="7.500" fill="#c83a3a"/><rect x="760" y="95.5" width="6.500" height="4.500" fill="#c8c8c8"/><path d="M760 97h6.500M760 98.7h6.500" stroke="#8a8a8a" stroke-width="0.800"/>
<path d="M756.5 114.5h13v13h-13z" fill="#fff" stroke="#3f68a4" stroke-width="0.900"/><rect x="761" y="115" width="8" height="2.500" fill="#a9b3cb"/><rect x="758.5" y="119" width="9.500" height="7.500" fill="#3a9a4a"/><rect x="760" y="120.5" width="6.500" height="4.500" fill="#c8c8c8"/><path d="M760 122h6.500M760 123.7h6.500" stroke="#8a8a8a" stroke-width="0.800"/>
<path d="M781.5 64.5h13v13h-13z" fill="#fff" stroke="#3f68a4" stroke-width="0.900"/><rect x="786" y="65" width="8" height="2.500" fill="#a9b3cb"/>
<rect x="784.500" y="69" width="7.500" height="7.500" fill="#f4f6fa" stroke="#c0c8da" stroke-width="0.800"/><circle cx="788.200" cy="72.700" r="2" fill="none" stroke="#7d93bd" stroke-width="1" stroke-dasharray="1 0.800"/>
<path d="M814.200 65.400L828.100 70.500L841.900 65.400V77.100Q834.500 78.500 834.500 84V90.600H822.200V84Q822.200 78.500 814.200 77.100z" fill="#fff" stroke="#2a5a95" stroke-width="1.500" stroke-linejoin="round"/>
<path d="M878.800 66Q870 67 868 72L872.400 80Q873 76.500 878.800 75.500z" fill="#f2f4f8" stroke="#9aa8c6" stroke-width="1.200" stroke-linejoin="round"/>
<path d="M857.300 66Q872.400 68 872.400 82V90.200H863.400V83Q863.400 76.500 857.300 75z" fill="#fff" stroke="#2a5a95" stroke-width="1.500" stroke-linejoin="round"/>
<path d="M861.500 70.500q6 2.500 7 9M861.500 70.500l2.500 -.3M861.500 70.500l1 2.200M874 73l3-2.500l-.3 2M877 70.500l-2 -.2" fill="none" stroke="#8da0c4" stroke-width="0.800"/>
<rect x="853.800" y="109.200" width="28.200" height="15.500" fill="#fff" stroke="#2a5a95" stroke-width="1.700"/>
<path d="M862 113.600H874M871.500 111.300l2.700 2.300l-2.700 2.300M874 120.100H862M864.500 117.800l-2.700 2.300l2.700 2.300" fill="none" stroke="#7f93ba" stroke-width="0.900"/>
<g fill="#fff" stroke="#b9c2d8" stroke-width="1"><rect x="902.500" y="85.500" width="11" height="9.500"/><rect x="913.500" y="85.500" width="14" height="9.500"/><rect x="916.500" y="95" width="11" height="10.500"/></g>
<path d="M913.500 85.500H917Q927.800 86 927.800 96.500V99.800H916.500V97Q916.500 94.800 913.500 94.800z" fill="#fff" stroke="#2a5a95" stroke-width="1.500" stroke-linejoin="round"/>
<path d="M899.700 113L909 104.500" stroke="#2a5a95" stroke-width="1.600"/>
<path d="M910.500 98.500l1 2.600l2.800 .1l-2.200 1.700l.8 2.700l-2.400-1.600l-2.400 1.600l.8-2.700l-2.200-1.700l2.800-.1z" fill="#2a5a95" stroke="#f4f6fa" stroke-width="0.500"/>
<g stroke="#3d68a4" stroke-width="1.700" fill="none"><path d="M946.300 68H971.300M946.300 88.100H956.500M961 88.100H971.300M946.300 107H956.500M961 107H971.300M946.300 127H971.300"/></g>
<g stroke="#2a5a95" stroke-width="1.300" fill="none"><path d="M958.800 71V81M955.500 78l3.300 3.300l3.300-3.300M958.800 112.500V122.800M955.500 119.800l3.300 3.300l3.300-3.300"/><rect x="956.600" y="85.900" width="4.400" height="4.400" fill="#fff"/><rect x="956.600" y="104.800" width="4.400" height="4.400" fill="#fff"/></g>
<rect x="990.200" y="70" width="15.800" height="15.800" rx="1" fill="#fff" stroke="#aebcd8" stroke-width="1.500"/>
<g stroke="#2a5a95" stroke-width="1.300" fill="none"><path d="M998 69V63M995 65.800l3-3l3 3M998 87V93M995 90.200l3 3l3-3M989 78H982.800M985.800 75l-3 3l3 3M1007 78H1013.400M1010.400 75l3 3l-3 3"/></g>
<text x="998.100" y="82.300" text-anchor="middle" font-family="Liberation Sans, sans-serif" font-weight="bold" font-size="11.500" fill="#2a5a95">A</text>
<rect x="1022.500" y="68.500" width="40" height="19" fill="#fff" stroke="#5878ac" stroke-width="1"/>
<text x="1025" y="77" font-family="Liberation Sans, sans-serif" font-weight="bold" font-size="7.500" fill="#4a6ea2">Tx...</text>
<rect x="982.700" y="101.500" width="16" height="16" fill="#fff" stroke="#8ea2c8" stroke-width="1"/>
<text x="991" y="115.300" text-anchor="middle" font-family="Liberation Sans, sans-serif" font-weight="bold" font-size="15" fill="#2a5a95">A</text>
<circle cx="996.300" cy="115.300" r="9" fill="rgba(255,255,255,0.25)" stroke="#2a5a95" stroke-width="1.300"/>
<path d="M1003 122.300L1011.500 130.200" stroke="#2a5a95" stroke-width="3.200" stroke-linecap="round"/>
</svg>
<div id="panel" style="left:13px;top:162px;width:256px;height:573px;background:#fff;border:1px solid #aca899;border-top-color:#cdc9be;border-left-color:#bdb9ac"></div>
<div style="left:15px;top:164px;width:252px;height:569px;background:#ece9e4"></div>
<div style="left:18px;top:188px;width:246px;height:542px;background:#fff;border:1px solid #7a8494"></div>
<div style="left:19px;top:189px;width:243px;height:24px;background:linear-gradient(#ffffff,#fafafa 45%,#f0f0f0 55%,#ececec);border-bottom:1px solid #d2d2d2"></div>
<div style="left:223px;top:189px;width:1px;height:23px;background:#dcdcdc"></div>
<div style="left:261px;top:189px;width:1px;height:23px;background:#e0e0e0"></div>
<span class="t" style="left:26.00px;top:195.00px;font-size:12.5px;line-height:15px;color:#000;transform:scaleX(0.8087);transform-origin:0 50%;">Floor plans</span>
<span class="t" style="left:232.00px;top:195.00px;font-size:12.5px;line-height:15px;color:#000;transform:scaleX(0.8400);transform-origin:0 50%;">DXF</span>
<div style="left:19px;top:214px;width:243px;height:21px;background:#cbdfeb;border-bottom:1px solid #b0b8be"></div>
<div style="left:223px;top:214px;width:1px;height:20px;background:#a9b2b8"></div>
<span class="t" style="left:23.30px;top:217.70px;font-size:12.5px;line-height:15px;color:#000;transform:scaleX(0.8549);transform-origin:0 50%;">1000-HVAC-001 DUCT LAYOUT</span>
<svg style="left:237px;top:218px" width="11" height="11" viewBox="0 0 11 11"><rect x="0.500" y="0.500" width="10" height="10" fill="#fff" stroke="#8a8a8a"/><path d="M2.300 5.200l2.300 2.500l4.200-4.900" fill="none" stroke="#000" stroke-width="2"/></svg>
<div style="left:271px;top:441px;width:2px;height:2px;background:#555"></div>
<div style="left:271px;top:445px;width:2px;height:2px;background:#555"></div>
<div style="left:271px;top:449px;width:2px;height:2px;background:#555"></div>
<div style="left:271px;top:453px;width:2px;height:2px;background:#555"></div>
<svg style="left:15px;top:163px" width="253" height="25" viewBox="15 163 253 25">
<path d="M23.5 170.5H31.5L34.5 173.5V184.0H23.5z" fill="#fff" stroke="#000" stroke-width="1"/><path d="M31.5 170.5V173.5H34.5" fill="none" stroke="#000" stroke-width="0.800"/>
<path d="M25.500 178H32M28.800 174.500V181.500" stroke="#10108a" stroke-width="1.500"/>
<path d="M46.5 170.5H54.5L57.5 173.5V184.0H46.5z" fill="#fff" stroke="#000" stroke-width="1"/><path d="M54.5 170.5V173.5H57.5" fill="none" stroke="#000" stroke-width="0.800"/>
<path d="M59.500 170L45.200 184" stroke="#f01020" stroke-width="3"/>
<path d="M67.5 169.5H73.5L76.5 172.5V182.5H67.5z" fill="#f4f0a0" stroke="#000" stroke-width="1"/><path d="M73.5 169.5V172.5H76.5" fill="none" stroke="#000" stroke-width="0.800"/>
<path d="M72 171.5H79.5L82.5 174.5V185.0H72z" fill="#fff" stroke="#000" stroke-width="1"/><path d="M79.5 171.5V174.5H82.5" fill="none" stroke="#000" stroke-width="0.800"/>
<path d="M92.5 170.5H101.0L104.0 173.5V184.0H92.5z" fill="#fff" stroke="#000" stroke-width="1"/><path d="M101.0 170.5V173.5H104.0" fill="none" stroke="#000" stroke-width="0.800"/>
<path d="M93.500 178.700l3-2.700h7v5.400h-7z" fill="#f0e000" stroke="#000" stroke-width="0.900"/><rect x="103.500" y="176" width="2" height="5.400" fill="#e01010" stroke="#000" stroke-width="0.600"/>
<path d="M112.5 168V185.500" stroke="#6e6e6e" stroke-width="1"/>
<path d="M166.5 168V185.500" stroke="#6e6e6e" stroke-width="1"/>
<path d="M220.5 168V185.500" stroke="#6e6e6e" stroke-width="1"/>
<path d="M128.600 169.800L135.200 176.500H131.500V183.800H125.700V176.500H122z" fill="#0000ff" stroke="#000060" stroke-width="0.600"/>
<path d="M151.700 184.800L158.300 178H154.600V170.500H148.800V178H145.100z" fill="#0000ff" stroke="#000060" stroke-width="0.600"/>
<path d="M175.500 170H188.500L190.500 172V184.500H183.500L182.500 183.500L181.500 184.500H175.500z" fill="#fff" stroke="#000" stroke-width="1"/>
<text x="177" y="176.500" font-family="Liberation Sans, sans-serif" font-weight="bold" font-size="5.500" fill="#000" textLength="11" lengthAdjust="spacingAndGlyphs">DXF</text>
<text x="177" y="182" font-family="Liberation Sans, sans-serif" font-weight="bold" font-size="5.500" fill="#000" textLength="11" lengthAdjust="spacingAndGlyphs">DWG</text>
<text x="197.800" y="174.800" font-family="Liberation Sans, sans-serif" font-weight="bold" font-size="6.500" fill="#8a0010" textLength="11.500" lengthAdjust="spacingAndGlyphs">DXF</text>
<text x="197.800" y="185" font-family="Liberation Sans, sans-serif" font-weight="bold" font-size="6.500" fill="#8a0010" textLength="11.500" lengthAdjust="spacingAndGlyphs">DWG</text>
<path d="M198 178.500l3-3h8v3z" fill="#fff" stroke="#555" stroke-width="0.700"/><path d="M201.500 177.500h5M205 176l1.800 1.500l-1.800 1.500" fill="none" stroke="#f01020" stroke-width="1"/>
<rect x="209.500" y="170.2" width="4.300" height="2.200" fill="#555"/>
<rect x="209.500" y="173.2" width="4.300" height="2.200" fill="#555"/>
<rect x="209.500" y="176.2" width="4.300" height="2.200" fill="#555"/>
<rect x="209.500" y="179.2" width="4.300" height="2.200" fill="#555"/>
<rect x="209.500" y="182.2" width="4.300" height="2.200" fill="#555"/>
<rect x="209" y="170" width="0.800" height="15" fill="#222"/>
<path d="M232 179L237.500 173L243 179z" fill="#000"/>
<path d="M253.800 175L259 181L264.200 175z" fill="#000"/>
</svg>
<div id="vtool" style="left:276px;top:162px;width:28px;height:487px;background:#cdcdcd;border:1px solid #666"></div>
<div style="left:278px;top:384px;width:23px;height:1px;background:#707070"></div>
<div style="left:278px;top:441px;width:23px;height:1px;background:#707070"></div>
<div style="left:278px;top:570px;width:23px;height:1px;background:#707070"></div>
<div id="canvas" style="left:305px;top:161px;width:723px;height:558px;background:#fff;overflow:hidden"></div>
<div style="left:305px;top:161px;width:723px;height:2px;background:#9b6b3d"></div>
<svg style="left:0;top:0" width="1057" height="748" viewBox="0 0 1057 748">
<g stroke="#f3f3f3" stroke-width="2">
<path d="M306.500 167V716" stroke-width="1"/>
<path d="M350.57 167V716"/>
<path d="M394.64 167V716"/>
<path d="M438.71 167V716"/>
<path d="M482.78 167V716"/>
<path d="M526.85 167V716"/>
<path d="M570.92 167V716"/>
<path d="M614.99 167V716"/>
<path d="M659.06 167V716"/>
<path d="M703.13 167V716"/>
<path d="M747.20 167V716"/>
<path d="M791.27 167V716"/>
<path d="M835.34 167V716"/>
<path d="M879.41 167V716"/>
<path d="M923.48 167V716"/>
<path d="M967.55 167V716"/>
<path d="M1011.62 167V716"/>
<path d="M306 189.40H1027.500"/>
<path d="M306 233.40H1027.500"/>
<path d="M306 277.40H1027.500"/>
<path d="M306 321.40H1027.500"/>
<path d="M306 365.40H1027.500"/>
<path d="M306 409.40H1027.500"/>
<path d="M306 453.40H1027.500"/>
<path d="M306 497.40H1027.500"/>
<path d="M306 541.40H1027.500"/>
<path d="M306 585.40H1027.500"/>
<path d="M306 629.40H1027.500"/>
<path d="M306 673.40H1027.500"/>
</g>
<path d="M305 277.500H1028" stroke="#d4d4d4" stroke-width="1.200"/>
<g shape-rendering="crispEdges"><rect x="437" y="167" width="1" height="549" fill="#e6d8c8"/><rect x="438" y="167" width="1" height="549" fill="#a66c5c"/><rect x="439" y="167" width="1" height="549" fill="#d4a6aa"/></g>
</svg>
<div style="left:1028px;top:161px;width:16px;height:558px;background:#f0f0f0"></div>
<div style="left:305px;top:719px;width:739px;height:16px;background:#f0f0f0"></div>
<div style="left:1028px;top:202px;width:15px;height:206px;border:1px solid #9a9a9a;border-radius:2px;background:linear-gradient(90deg,#f4f4f4,#e2e2e2 45%,#cfcfcf 55%,#d8d8d8)"></div>
<div style="left:1032px;top:301px;width:7px;height:1px;background:#555"></div>
<div style="left:1032px;top:303px;width:7px;height:1px;background:#555"></div>
<div style="left:1032px;top:305px;width:7px;height:1px;background:#555"></div>
<div style="left:1032px;top:307px;width:7px;height:1px;background:#555"></div>
<div style="left:414px;top:719px;width:273px;height:15px;border:1px solid #9a9a9a;border-radius:2px;background:linear-gradient(#f4f4f4,#e2e2e2 45%,#cfcfcf 55%,#d8d8d8)"></div>
<div style="left:546px;top:723px;width:1px;height:7px;background:#444"></div>
<div style="left:548px;top:723px;width:1px;height:7px;background:#444"></div>
<div style="left:550px;top:723px;width:1px;height:7px;background:#444"></div>
<svg style="left:1033px;top:168px" width="7" height="4" viewBox="0 0 7 4"><path d="M0 4L3.5 0L7 4z" fill="#444"/></svg>
<svg style="left:1033px;top:707px" width="7" height="4" viewBox="0 0 7 4"><path d="M0 0h7L3.500 4z" fill="#404040"/></svg>
<svg style="left:310px;top:723px" width="4" height="7" viewBox="0 0 4 7"><path d="M4 0v7L0 3.500z" fill="#404040"/></svg>
<svg style="left:1016px;top:723px" width="4" height="7" viewBox="0 0 4 7"><path d="M0 0v7L4 3.500z" fill="#404040"/></svg>
<svg style="left:277px;top:163px" width="26" height="484" viewBox="277 163 26 484">
<path d="M284.500 170.500l11 11.500" stroke="#000" stroke-width="1.500"/><path d="M283.500 171.500a2.500 2.500 0 0 1 3.500-2.500l-1.500 1.800l1 1l1.800-1.500a2.500 2.500 0 0 1-2.500 3.500z" fill="#000"/>
<path d="M294.500 172l-10 10.500" stroke="#000" stroke-width="1.500"/><path d="M288.500 170.500l3.500-2l5 3.500l.5 3l-2-2l-1.500 1.500l-3.500-3z" fill="#8a8a10" stroke="#000" stroke-width="0.700"/>
<path d="M286.500 205.500V199a4 4 0 0 1 8 0V205.500" fill="none" stroke="#000" stroke-width="5"/>
<path d="M286.300 205V199a4 4 0 0 1 8 0V205" fill="none" stroke="#e8101a" stroke-width="3.600"/>
<rect x="284.500" y="203.500" width="3.600" height="2" fill="#fff"/><rect x="292.500" y="203.500" width="3.600" height="2" fill="#fff"/>
<rect x="285" y="219" width="10.500" height="10" fill="#d9d9d9" stroke="#7a3a10" stroke-width="1.800"/>
<path d="M285.500 241V255M290.500 241V255M295.500 241V255M282.500 243.500H298M282.500 248.500H298M282.500 252.500H298" stroke="#5a5a5a" stroke-width="1" fill="none" shape-rendering="crispEdges"/>
<rect x="286.500" y="268.500" width="5.500" height="5.500" fill="#ddd" stroke="#8a4a14" stroke-width="1.200"/><rect x="288.700" y="270.700" width="1.200" height="1.200" fill="#333"/>
<rect x="283.0" y="265.0" width="1" height="1" fill="#333"/>
<rect x="288.8" y="265.0" width="1" height="1" fill="#333"/>
<rect x="294.5" y="265.0" width="1" height="1" fill="#333"/>
<rect x="283.0" y="270.8" width="1" height="1" fill="#333"/>
<rect x="294.5" y="270.8" width="1" height="1" fill="#333"/>
<rect x="283.0" y="276.5" width="1" height="1" fill="#333"/>
<rect x="288.8" y="276.5" width="1" height="1" fill="#333"/>
<rect x="294.5" y="276.5" width="1" height="1" fill="#333"/>
<rect x="282.500" y="291" width="15.500" height="9" fill="#555"/>
<path d="M283.500 293H297M283.500 295.300H297M284 297.600H296.500" stroke="#c4c4c4" stroke-width="1" stroke-dasharray="1.300 0.700"/>
<rect x="284.500" y="314.500" width="11" height="6" fill="#b4b4b4" stroke="#444" stroke-width="1"/><text x="290" y="319.600" text-anchor="middle" font-family="Liberation Sans, sans-serif" font-weight="bold" font-size="5" fill="#111">4.4</text>
<path d="M282.500 325.500H297.500M282.500 323.500V327.500M297.500 323.500V327.500" stroke="#333" stroke-width="1"/>
<path d="M283 348.200H297M288.200 339V348" stroke="#000" stroke-width="1.200" fill="none"/><path d="M288.500 343.500a4.500 4.500 0 0 1 4.500 4.500" fill="none" stroke="#000" stroke-width="0.900"/><rect x="289.500" y="345.300" width="1.200" height="1.200" fill="#000"/>
<rect x="283.300" y="360.300" width="2.400" height="2.400" fill="#fff" stroke="#10308a" stroke-width="1.100"/><rect x="292.800" y="361" width="2.600" height="2.600" fill="#fff" stroke="#10308a" stroke-width="1.100"/><path d="M287 361.500H291.500" stroke="#10308a" stroke-width="1.200"/>
<rect x="284.500" y="365.500" width="11.500" height="10.500" fill="none" stroke="#666" stroke-width="1" stroke-dasharray="1 1"/>
<rect x="286.800" y="367.500" width="2.400" height="2.400" fill="#fff" stroke="#e0681a" stroke-width="1.100"/><rect x="291.800" y="371.500" width="2.400" height="2.400" fill="#fff" stroke="#e0681a" stroke-width="1.100"/><path d="M290 368.700h3v2" fill="none" stroke="#e0681a" stroke-width="1.100"/>
<path d="M287.500 394l6.500 6.500M294 394l-6.500 6.500" fill="none" stroke="#fff" stroke-width="1.2" transform="translate(1 1)"/><path d="M287.500 394l6.500 6.500M294 394l-6.500 6.500" fill="none" stroke="#9c9c9c" stroke-width="1.2"/>
<path d="M282.500 403.500H298" fill="none" stroke="#fff" stroke-width="1.2" transform="translate(1 1)"/><path d="M282.500 403.500H298" fill="none" stroke="#9c9c9c" stroke-width="1.2"/>
<path d="M289.500 402.500h2.200v2.200h-2.200z" fill="#fff" transform="translate(1 1)"/><path d="M289.500 402.500h2.200v2.200h-2.200z" fill="#9c9c9c"/>
<path d="M282.500 424.500H298" fill="none" stroke="#fff" stroke-width="2.2" transform="translate(1 1)"/><path d="M282.500 424.500H298" fill="none" stroke="#9c9c9c" stroke-width="2.2"/>
<path d="M287 420.500l7 8M294 420.500l-7 8" fill="none" stroke="#fff" stroke-width="1.2" transform="translate(1 1)"/><path d="M287 420.500l7 8M294 420.500l-7 8" fill="none" stroke="#9c9c9c" stroke-width="1.2"/>
<path d="M283.500 458.500H294" fill="none" stroke="#fff" stroke-width="2.7" transform="translate(1 1)"/><path d="M283.500 458.500H294" fill="none" stroke="#9c9c9c" stroke-width="2.7"/>
<path d="M293 455l5 3.500l-5 3.500zM282 458.500a1.800 1.800 0 1 0 3.600 0a1.800 1.800 0 1 0-3.600 0z" fill="#fff" transform="translate(1 1)"/><path d="M293 455l5 3.500l-5 3.500zM282 458.500a1.800 1.800 0 1 0 3.600 0a1.800 1.800 0 1 0-3.600 0z" fill="#9c9c9c"/>
<path d="M290.500 479V488" fill="none" stroke="#fff" stroke-width="2.7" transform="translate(1 1)"/><path d="M290.500 479V488" fill="none" stroke="#9c9c9c" stroke-width="2.7"/>
<path d="M287 480l3.500-5l3.500 5zM288.700 488.500a1.800 1.800 0 1 0 3.600 0a1.800 1.800 0 1 0-3.600 0z" fill="#fff" transform="translate(1 1)"/><path d="M287 480l3.500-5l3.500 5zM288.700 488.500a1.800 1.800 0 1 0 3.600 0a1.800 1.800 0 1 0-3.600 0z" fill="#9c9c9c"/>
<path d="M286.500 506.800H297" fill="none" stroke="#fff" stroke-width="2.7" transform="translate(1 1)"/><path d="M286.500 506.800H297" fill="none" stroke="#9c9c9c" stroke-width="2.7"/>
<path d="M287.500 503.300l-5 3.500l5 3.500zM295.200 506.800a1.800 1.800 0 1 0 3.600 0a1.800 1.800 0 1 0-3.600 0z" fill="#fff" transform="translate(1 1)"/><path d="M287.500 503.300l-5 3.500l5 3.500zM295.200 506.800a1.800 1.800 0 1 0 3.600 0a1.800 1.800 0 1 0-3.600 0z" fill="#9c9c9c"/>
<path d="M290.700 524V533" fill="none" stroke="#fff" stroke-width="2.7" transform="translate(1 1)"/><path d="M290.700 524V533" fill="none" stroke="#9c9c9c" stroke-width="2.7"/>
<path d="M287.200 532.500l3.500 5l3.500-5zM288.900 524a1.800 1.800 0 1 0 3.600 0a1.800 1.800 0 1 0-3.600 0z" fill="#fff" transform="translate(1 1)"/><path d="M287.200 532.500l3.500 5l3.500-5zM288.900 524a1.800 1.800 0 1 0 3.600 0a1.800 1.800 0 1 0-3.600 0z" fill="#9c9c9c"/>
<path d="M287 558.500L293.500 552.500H297" fill="none" stroke="#fff" stroke-width="2" transform="translate(1 1)"/><path d="M287 558.500L293.500 552.500H297" fill="none" stroke="#9c9c9c" stroke-width="2"/>
<path d="M284.500 559a2.200 2.200 0 1 0 4.400 0a2.200 2.200 0 1 0-4.400 0zM294 550h4v4.500h-4z" fill="#fff" transform="translate(1 1)"/><path d="M284.500 559a2.200 2.200 0 1 0 4.400 0a2.200 2.200 0 1 0-4.400 0zM294 550h4v4.500h-4z" fill="#9c9c9c"/>
<text x="285.800" y="553" font-family="Liberation Sans, sans-serif" font-weight="bold" font-size="7.500" fill="#fff">?</text><text x="285" y="552.300" font-family="Liberation Sans, sans-serif" font-weight="bold" font-size="7.500" fill="#9c9c9c">?</text>
<path d="M286.500 583h7.200v11.500h-7.200z" fill="#fff" transform="translate(1 1)"/><path d="M286.500 583h7.200v11.500h-7.200z" fill="#9c9c9c"/>
<path d="M286.5 593V580M284.5 581.5l2-2.500l2 2.500" fill="none" stroke="#fff" stroke-width="1" transform="translate(1 1)"/><path d="M286.5 593V580M284.5 581.5l2-2.500l2 2.500" fill="none" stroke="#9c9c9c" stroke-width="1"/>
<path d="M286.500 607h7.200v11.500h-7.200z" fill="#fff" transform="translate(1 1)"/><path d="M286.500 607h7.200v11.500h-7.200z" fill="#9c9c9c"/>
<path d="M290 617V604M288 605.5l2-2.500l2 2.500" fill="none" stroke="#fff" stroke-width="1" transform="translate(1 1)"/><path d="M290 617V604M288 605.5l2-2.500l2 2.500" fill="none" stroke="#9c9c9c" stroke-width="1"/>
<path d="M286.500 631h7.200v11.500h-7.200z" fill="#fff" transform="translate(1 1)"/><path d="M286.500 631h7.200v11.500h-7.200z" fill="#9c9c9c"/>
<path d="M293.5 641V628M291.5 629.5l2-2.500l2 2.500" fill="none" stroke="#fff" stroke-width="1" transform="translate(1 1)"/><path d="M293.5 641V628M291.5 629.5l2-2.500l2 2.500" fill="none" stroke="#9c9c9c" stroke-width="1"/>
</svg>
<svg id="drawing" style="left:0;top:0" width="1057" height="748" viewBox="0 0 1057 748">
<g stroke="#8e8c50" stroke-width="1" shape-rendering="crispEdges"><path d="M625 453.5H715"/><path d="M670.5 408V497"/></g>
<g stroke="#1080f5" stroke-width="2" fill="none">
<path d="M394 227.600H572"/><path d="M394 239H566"/>
<path d="M566 238V629"/><path d="M576.200 233V271M576.200 282V447M576.200 458V618"/>
<path d="M571 271.2H616"/><path d="M571 282.2H616"/>
<path d="M571 447.2H616"/><path d="M571 458.2H616"/>
<path d="M571 618.2H616"/><path d="M571 629.2H616"/>
</g>
<g stroke="#1080f5" stroke-width="1" fill="none" stroke-dasharray="4 3" shape-rendering="crispEdges">
<path d="M400 233.500H566"/><path d="M571.500 239V619"/>
<path d="M577 277.5H611"/>
<path d="M577 453.5H611"/>
<path d="M577 624.5H611"/>
</g>
<g fill="#1080f5" stroke="#1080f5" stroke-width="0.800" stroke-linejoin="round">
<path d="M480.500 231.200l4.800 2.300l-4.800 2.300z"/><path d="M479 233.500h3" />
<path d="M591 275.2l4.800 2.300l-4.800 2.300z"/><path d="M589.500 277.5h3"/>
<path d="M591 451.2l4.800 2.300l-4.800 2.300z"/><path d="M589.500 453.5h3"/>
<path d="M591 622.2l4.800 2.300l-4.800 2.300z"/><path d="M589.500 624.5h3"/>
</g>
<g fill="none" stroke="#1080f5" stroke-width="1">
<path d="M569.300 254l2.200 4l2.200-4"/>
<path d="M569.300 363l2.200 4l2.200-4"/>
<path d="M569.300 536l2.200 4l2.200-4"/>
</g>
<rect x="670" y="435" width="35.4" height="36.0" fill="none" stroke="#1080f5" stroke-width="2"/><path fill-rule="evenodd" fill="#1080f5" d="M673.8 453a13.7 13.7 0 1 0 27.4 0a13.7 13.7 0 1 0 -27.4 0zM691.73 448.07L693.82 453.38L691.75 458.71L686.11 459.57L681.38 456.37L681.80 450.67L685.97 446.77z"/><circle cx="687.5" cy="453" r="11.5" fill="none" stroke="#9ccaf8" stroke-width="0.900" stroke-dasharray="1.200 3"/>
<rect x="615.5" y="606.8" width="34.3" height="34.1" fill="none" stroke="#1080f5" stroke-width="2"/><path fill-rule="evenodd" fill="#1080f5" d="M619.0999999999999 624a13.7 13.7 0 1 0 27.4 0a13.7 13.7 0 1 0 -27.4 0zM637.03 619.07L639.12 624.38L637.05 629.71L631.41 630.57L626.68 627.37L627.10 621.67L631.27 617.77z"/><circle cx="632.8" cy="624" r="11.5" fill="none" stroke="#9ccaf8" stroke-width="0.900" stroke-dasharray="1.200 3"/>
<g fill="#5fa8c8" stroke="#f0a48e" stroke-width="1">
<rect x="389.5" y="228.5" width="9.500" height="9.500"/>
<rect x="566.5" y="228.5" width="9.500" height="9.500"/>
<rect x="566.5" y="272.5" width="9.500" height="9.500"/>
<rect x="610.5" y="272.5" width="9.500" height="9.500"/>
<rect x="566.5" y="448.5" width="9.500" height="9.500"/>
<rect x="610.5" y="448.5" width="9.500" height="9.500"/>
<rect x="566.5" y="619.5" width="9.500" height="9.500"/>
<rect x="610.5" y="619.5" width="9.500" height="9.500"/>
</g>
<text x="470" y="215.5" font-family="Liberation Sans, sans-serif" font-size="3.9" font-weight="bold" fill="#000" stroke="#000" stroke-width="0.25">300 x 300 mm</text>
<text x="470" y="220.5" font-family="Liberation Sans, sans-serif" font-size="3.9" font-weight="bold" fill="#000" stroke="#000" stroke-width="0.25">800 l/s</text>
<text x="580.5" y="264.2" font-family="Liberation Sans, sans-serif" font-size="3.9" font-weight="bold" fill="#000" stroke="#000" stroke-width="0.25">300 x 300 mm</text>
<text x="580.5" y="268.8" font-family="Liberation Sans, sans-serif" font-size="3.9" font-weight="bold" fill="#000" stroke="#000" stroke-width="0.25">200 l/s</text>
<text x="580.5" y="440.2" font-family="Liberation Sans, sans-serif" font-size="3.9" font-weight="bold" fill="#000" stroke="#000" stroke-width="0.25">300 x 300 mm</text>
<text x="580.5" y="444.8" font-family="Liberation Sans, sans-serif" font-size="3.9" font-weight="bold" fill="#000" stroke="#000" stroke-width="0.25">200 l/s</text>
<text x="580.5" y="607" font-family="Liberation Sans, sans-serif" font-size="3.9" font-weight="bold" fill="#000" stroke="#000" stroke-width="0.25">300 x 300 mm</text>
<text x="580.5" y="611.6" font-family="Liberation Sans, sans-serif" font-size="3.9" font-weight="bold" fill="#000" stroke="#000" stroke-width="0.25">200 l/s</text>
<text x="600.5" y="601.5" font-family="Liberation Sans, sans-serif" font-size="3.7" font-weight="bold" fill="#000" stroke="#000" stroke-width="0.25">RD-600 mm Square Plenum Damper</text>
<text x="606" y="605.5" font-family="Liberation Sans, sans-serif" font-size="3.7" font-weight="bold" fill="#000" stroke="#000" stroke-width="0.25">200 l/s</text>
<text x="558" y="268" font-family="Liberation Sans, sans-serif" font-size="3.9" font-weight="bold" fill="#000" stroke="#000" stroke-width="0.25" transform="rotate(-90 558 268)">300 x 300 mm</text>
<text x="562" y="268" font-family="Liberation Sans, sans-serif" font-size="3.9" font-weight="bold" fill="#000" stroke="#000" stroke-width="0.25" transform="rotate(-90 562 268)">600 l/s</text>
<text x="558" y="377" font-family="Liberation Sans, sans-serif" font-size="3.9" font-weight="bold" fill="#000" stroke="#000" stroke-width="0.25" transform="rotate(-90 558 377)">300 x 300 mm</text>
<text x="562" y="377" font-family="Liberation Sans, sans-serif" font-size="3.9" font-weight="bold" fill="#000" stroke="#000" stroke-width="0.25" transform="rotate(-90 562 377)">600 l/s</text>
<text x="558" y="551" font-family="Liberation Sans, sans-serif" font-size="3.9" font-weight="bold" fill="#000" stroke="#000" stroke-width="0.25" transform="rotate(-90 558 551)">300 x 300 mm</text>
<text x="562" y="551" font-family="Liberation Sans, sans-serif" font-size="3.9" font-weight="bold" fill="#000" stroke="#000" stroke-width="0.25" transform="rotate(-90 562 551)">600 l/s</text>
</svg>
<span class="t" style="left:708.00px;top:423.00px;font-size:14.5px;line-height:17px;color:#ad8f70;transform:scaleX(0.9130);transform-origin:0 50%;-webkit-text-stroke:0;">BOX STORE</span>
</div>
</body></html>
